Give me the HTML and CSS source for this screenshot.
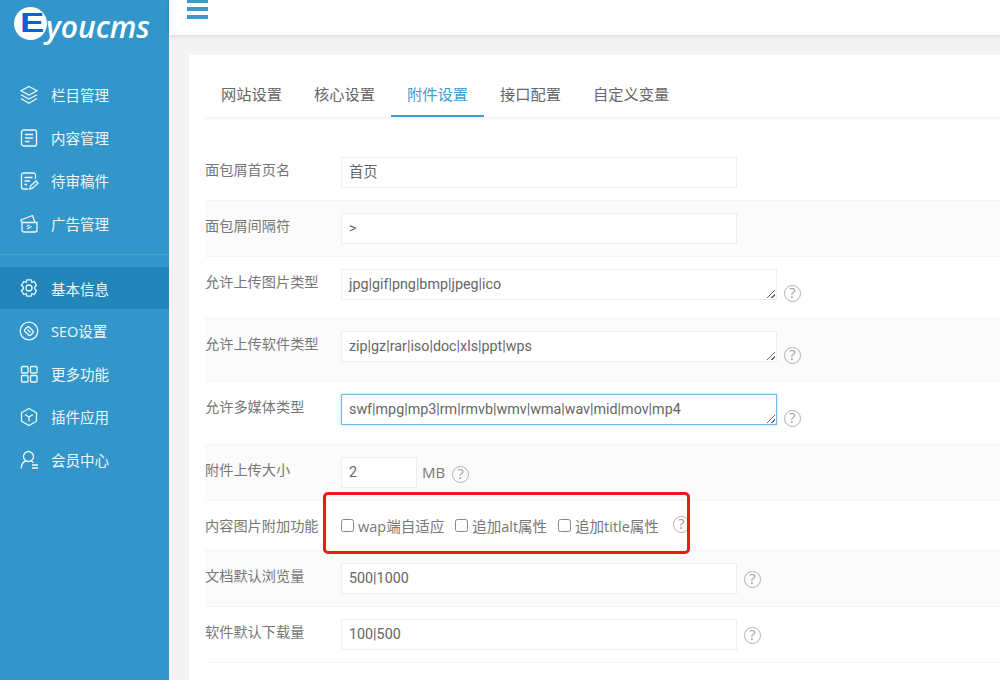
FILE: index.html
```html
<!DOCTYPE html>
<html lang="zh-CN">
<head>
    <meta charset="UTF-8">
    <title>基本信息</title>
    <link rel="stylesheet" href="styles.css">
</head>
<body>
    <div class="sidebar">
        <div class="logo">
            <span class="logo-badge"><span class="logo-e">E</span></span><span class="logo-text">youcms</span>
        </div>
        <ul class="menu menu-first">
            <li><svg viewBox="0 0 20 20"><path d="M10 1.500l8 4.300-8 4.300-8-4.300zM2 9.700l8 4.300 8-4.300M2 13.500l8 4.700 8-4.700"/></svg>栏目管理</li>
            <li><svg viewBox="0 0 20 20"><rect x="2.500" y="2" width="15" height="16" rx="2"/><path d="M6 6.500h8M6 10h8M6 13.500h4.500"/></svg>内容管理</li>
            <li><svg viewBox="0 0 20 20"><path d="M16.500 8V4a2 2 0 0 0-2-2h-10a2 2 0 0 0-2 2v12a2 2 0 0 0 2 2h5M5.500 6.500h8M5.500 10h5.500M5.500 13.500h2.500M11 18l.5-3 5.500-5 2 2.200-5.500 5z"/></svg>待审稿件</li>
            <li><svg viewBox="0 0 20 20"><path d="M3 8.500h15v7.500a2 2 0 0 1-2 2h-11a2 2 0 0 1-2-2zM3 8.500l-1.200-2.500 11.700-4.500 2.500 7M8 15l4.500-2.500M8 12.500l2.500-1.500"/></svg>广告管理</li>
        </ul>
        <ul class="menu">
            <li class="on"><svg viewBox="0 0 20 20"><path d="M7.800 1.800h4.400l.6 2.500 2.400-.8 2.300 3.800-1.800 1.700v2l1.800 1.700-2.300 3.800-2.400-.8-.6 2.500h-4.400l-.6-2.500-2.400.8-2.300-3.800 1.800-1.700v-2l-1.800-1.700 2.300-3.800 2.400.8z"/><circle cx="10" cy="10" r="3"/></svg>基本信息</li>
            <li><svg viewBox="0 0 20 20"><circle cx="10" cy="10" r="8.800"/><path d="M6 8.200l2-2a1.600 1.600 0 0 1 2.300 0l3.500 3.500a1.600 1.600 0 0 1 0 2.300l-2 2a1.600 1.600 0 0 1-2.300 0l-3.500-3.500a1.600 1.600 0 0 1 0-2.300zM8.500 8.500l3 3"/></svg>SEO设置</li>
            <li><svg viewBox="0 0 20 20"><rect x="2.500" y="2.500" width="6.500" height="6.500" rx="1"/><rect x="11.500" y="2.500" width="6.500" height="6.500" rx="1"/><rect x="2.500" y="11.500" width="6.500" height="6.500" rx="1"/><rect x="11.500" y="11.500" width="6.500" height="6.500" rx="1"/></svg>更多功能</li>
            <li><svg viewBox="0 0 20 20"><path d="M10 1.500l7.500 4.300v8.400l-7.500 4.300-7.500-4.300v-8.400zM6 7.500l4 2.500 4-2.500M10 10v4.500"/></svg>插件应用</li>
            <li><svg viewBox="0 0 20 20"><circle cx="9.500" cy="6.500" r="5"/><path d="M2 18.500c.5-4 2.500-7 5-7.500M12 11c1 .3 2 1 2.500 2M13 15h6M13 18h6"/></svg>会员中心</li>
        </ul>
    </div>

    <div class="main">
        <div class="topbar">
            <div class="hamburger"><i></i><i></i><i></i></div>
        </div>
        <div class="card">
            <div class="tabs">
                <a>网站设置</a>
                <a>核心设置</a>
                <a class="active">附件设置</a>
                <a>接口配置</a>
                <a>自定义变量</a>
            </div>
            <div class="rows">
                <div class="row row-1">
                    <label>面包屑首页名</label>
                    <div class="input long">首页</div>
                </div>
                <div class="row row-2 alt">
                    <label>面包屑间隔符</label>
                    <div class="input long">&gt;</div>
                </div>
                <div class="row row-3">
                    <label>允许上传图片类型</label>
                    <div class="textarea">jpg|gif|png|bmp|jpeg|ico<span class="grip"></span></div>
                    <span class="help help-area">?</span>
                </div>
                <div class="row row-4 alt">
                    <label>允许上传软件类型</label>
                    <div class="textarea">zip|gz|rar|iso|doc|xls|ppt|wps<span class="grip"></span></div>
                    <span class="help help-area">?</span>
                </div>
                <div class="row row-5">
                    <label>允许多媒体类型</label>
                    <div class="textarea focus">swf|mpg|mp3|rm|rmvb|wmv|wma|wav|mid|mov|mp4<span class="grip"></span></div>
                    <span class="help help-area">?</span>
                </div>
                <div class="row row-6 alt">
                    <label>附件上传大小</label>
                    <div class="input short">2</div>
                    <span class="unit">MB</span>
                    <span class="help help-mb">?</span>
                </div>
                <div class="row row-7">
                    <label>内容图片附加功能</label>
                    <span class="check"><i></i>wap端自适应</span>
                    <span class="check"><i></i>追加alt属性</span>
                    <span class="check"><i></i>追加title属性</span>
                    <span class="help help-check">?</span>
                    <div class="mark"></div>
                </div>
                <div class="row row-8 alt">
                    <label>文档默认浏览量</label>
                    <div class="input long">500|1000</div>
                    <span class="help">?</span>
                </div>
                <div class="row row-9">
                    <label>软件默认下载量</label>
                    <div class="input long">100|500</div>
                    <span class="help">?</span>
                </div>
            </div>
        </div>
    </div>
</body>
</html>
```

FILE: styles.css
```css
* {
    box-sizing: border-box;
}
html, body {
    margin: 0;
    padding: 0;
    height: 680px;
    overflow: hidden;
}
body {
    display: flex;
    background: #f3f3f3;
    font-family: "Open Sans", "Noto Sans CJK SC", sans-serif;
    font-size: 14px;
    color: #777;
}

/* 左侧菜单 */
.sidebar {
    width: 169px;
    height: 680px;
    flex: none;
    background: #3296ca;
    color: #eef7fb;
}
.logo {
    height: 73px;
    padding: 7px 0 0 14px;
    display: flex;
    align-items: flex-start;
}
.logo-badge {
    width: 33px;
    height: 33px;
    border-radius: 50%;
    background: #fff;
    flex: none;
    position: relative;
}
.logo-e {
    position: absolute;
    left: 6px;
    top: 2px;
    font: bold 28px/28px "Liberation Sans", sans-serif;
    color: #0b62d6;
    transform: scaleX(1.3);
    transform-origin: left center;
}
.logo-text {
    font: italic 600 30px/38px "Open Sans", sans-serif;
    color: #fff;
    margin-left: -1px;
    margin-top: 1px;
}
.menu {
    list-style: none;
    margin: 0;
    padding: 0;
}
.menu li {
    height: 43px;
    padding-left: 19px;
    display: flex;
    align-items: center;
    gap: 12px;
    font-size: 14.5px;
}
.menu svg {
    width: 20px;
    height: 20px;
    fill: none;
    stroke: #eef7fb;
    stroke-width: 1.3;
    flex: none;
}
.menu-first {
    height: 182px;
    border-bottom: 1px solid #4aa3d1;
}
.menu .on {
    background: #2386bb;
    height: 42px;
    margin-top: 12px;
}

/* 右侧 */
.main {
    flex: 1;
    min-width: 0;
}
.topbar {
    height: 35px;
    background: #fff;
    box-shadow: 0 1px 4px rgba(0, 0, 0, 0.12);
    padding-left: 18px;
    overflow: hidden;
}
.hamburger {
    width: 21px;
    margin-top: -1px;
    display: flex;
    flex-direction: column;
    gap: 4px;
}
.hamburger i {
    display: block;
    height: 4px;
    background: #3a9bce;
}
.card {
    margin: 20px 0 0 20px;
    height: 625px;
    background: #fff;
    padding-left: 16px;
}
.tabs {
    height: 64px;
    display: flex;
    align-items: flex-end;
    border-bottom: 2px solid #f5f5f5;
}
.tabs a {
    height: 64px;
    padding: 29px 16px 0;
    font-size: 15.25px;
    line-height: 24px;
    color: #666;
}
.tabs .active {
    color: #3c9dd3;
    border-bottom: 2px solid #3c9dd3;
}

.rows {
    padding-top: 18px;
}
.row {
    display: flex;
    align-items: flex-start;
    border-bottom: 1px solid #f5f5f5;
    padding-top: 12px;
}
.alt {
    background: #fbfbfb;
}
.row label {
    width: 136px;
    margin-top: 1px;
    flex: none;
    font-size: 14.2px;
    line-height: 24px;
    color: #777;
}
.row-1 { height: 64px; padding-top: 20px; }
.row-2 { height: 56px; }
.row-3 { height: 62px; }
.row-4 { height: 63px; }
.row-5 { height: 63px; }
.row-6 { height: 56px; }
.row-7 {
    height: 50px;
    padding-top: 14px;
    position: relative;
    z-index: 1;
}
.row-7 label { margin-top: -1px; }
.row-8 { height: 56px; }
.row-9 { height: 56px; }

.input, .textarea {
    height: 31px;
    border: 1px solid #eee;
    background: #fff;
    padding: 0 7px;
    line-height: 29px;
    font-family: Roboto, "Noto Sans CJK SC", sans-serif;
    font-size: 14.3px;
    color: #666;
}
.long {
    width: 396px;
}
.short {
    width: 76px;
}
.textarea {
    width: 436px;
    position: relative;
}
.focus {
    border-color: #6fbce6;
    box-shadow: 0 0 3px rgba(111, 188, 230, 0.5);
}
.grip {
    position: absolute;
    right: 1px;
    bottom: 1px;
    width: 9px;
    height: 9px;
    background: linear-gradient(135deg, transparent 50%, #666 50%, #666 60%, transparent 60%, transparent 75%, #666 75%, #666 85%, transparent 85%);
}
.help {
    width: 17px;
    height: 17px;
    margin: 8px 0 0 7px;
    border: 1.5px solid #b0b0b0;
    border-radius: 50%;
    font-size: 14.5px;
    line-height: 14px;
    text-align: center;
    color: #a0a0a0;
    flex: none;
}
.help-area {
    margin-top: 16px;
}
.unit {
    margin-left: 5px;
    line-height: 30px;
    font-size: 15px;
}
.help-mb {
    margin: 9px 0 0 7px;
}
.check {
    display: flex;
    align-items: center;
    line-height: 24px;
    margin-right: 11px;
    font-size: 14.5px;
}
.check i {
    display: block;
    width: 13px;
    height: 13px;
    margin: -4px 4px 0 0;
    border: 1px solid #888;
    border-radius: 2.5px;
    background: #fff;
}
.help-check {
    margin: 1px 0 0 3px;
}
.mark {
    position: absolute;
    left: 118px;
    top: -9px;
    width: 367px;
    height: 62px;
    border: 3px solid #f01818;
    border-radius: 5px;
}
```
